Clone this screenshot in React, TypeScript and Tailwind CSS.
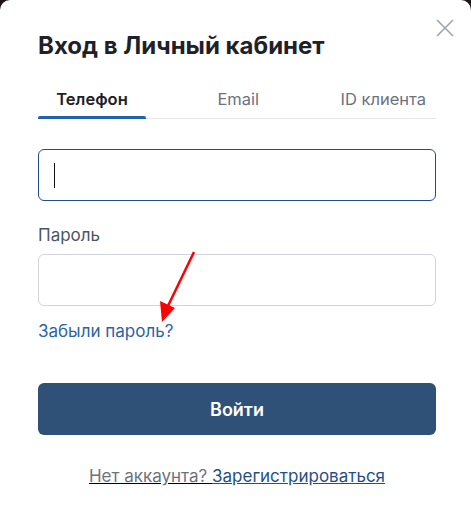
import React from "react";

const tabs = ["Телефон", "Email", "ID клиента"];

export default function App() {
  return (
    <div className="min-h-screen w-full bg-[#1b1418]" style={{ fontFamily: "Inter, 'Noto Sans', sans-serif" }}>
      <div className="relative h-[520px] w-[471px] rounded-t-[10px] bg-white pl-[38px] pr-[35px] pt-[29px]">
        <button type="button" className="absolute right-[16px] top-[18px] text-[#9ca3af]" aria-label="Закрыть">
          <svg width="20" height="20" viewBox="0 0 20 20" fill="none" stroke="currentColor" strokeWidth="1.6">
            <path d="M2 2 L18 18 M18 2 L2 18" />
          </svg>
        </button>

        <h2 className="text-[24px] font-bold leading-[34px] text-[#1d2129]">Вход в Личный кабинет</h2>

        <div className="mt-[18px] grid grid-cols-[108px_1fr_auto] border-b border-[#e5e7eb]">
          {tabs.map((t, i) => (
            <div
              key={t}
              className={`relative -mb-px flex h-[38px] items-center justify-center pb-[2px] text-[16.5px] ${
                i === 0 ? "font-semibold text-[#1d2129]" : "text-[#6b7280]"
              } ${i === 2 ? "px-[10px]" : ""}`}
            >
              <span className="leading-[22px]">{t}</span>
              {i === 0 && <span className="absolute bottom-0 left-0 right-0 h-[3px] rounded-t-[2px] bg-[#2161b0]" />}
            </div>
          ))}
        </div>

        <div className="mt-[30px] flex h-[52px] items-center rounded-[6px] border border-[#1e4f8a] px-[15px]">
          <span className="h-[25px] w-px bg-[#111]" />
        </div>

        <div className="mt-[23px] text-[17px] leading-[22px] text-[#4b5563]">Пароль</div>
        <div className="mt-[8px] h-[52px] rounded-[6px] border border-[#d1d5db]" />

        <a href="#" className="mt-[14px] block text-[17px] leading-[22px] text-[#2a63a8]">
          Забыли пароль?
        </a>

        <button
          type="button"
          className="mt-[41px] flex h-[52px] w-full items-center justify-center rounded-[6px] bg-[#2f5177] text-[18px] font-semibold text-white"
        >
          Войти
        </button>

        <div className="mt-[30px] text-center text-[17px] leading-[22px] underline">
          <span className="text-[#6b7280]">Нет аккаунта? </span>
          <a href="#" className="text-[#1e4f8a]">Зарегистрироваться</a>
        </div>

        <svg className="pointer-events-none absolute left-0 top-0" width="471" height="520">
          <line x1="194" y1="252" x2="167" y2="308" stroke="#ff0000" strokeWidth="2.5" />
          <polygon points="162,322 160,301 175,308" fill="#ff0000" />
        </svg>
      </div>
    </div>
  );
}
